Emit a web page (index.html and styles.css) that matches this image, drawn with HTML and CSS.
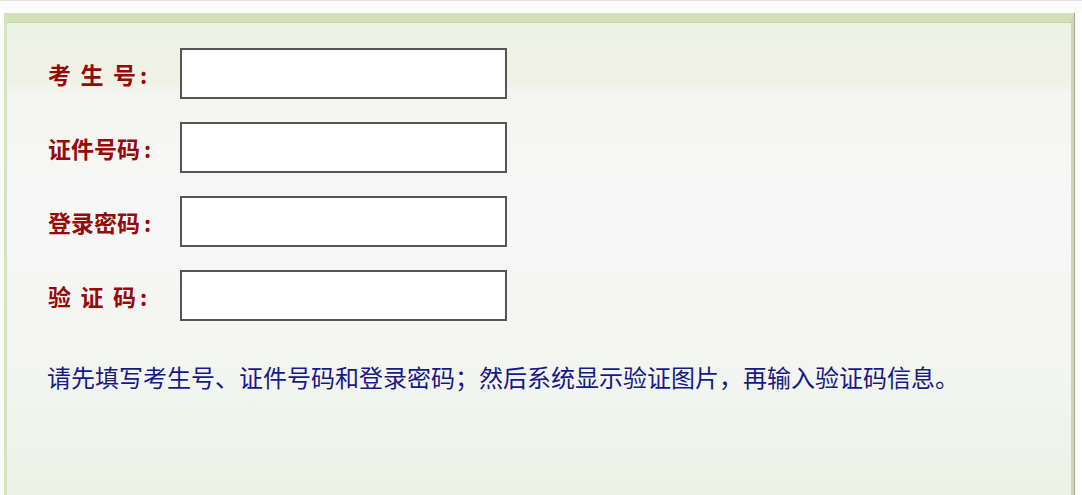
FILE: index.html
```html
<!DOCTYPE html>
<html lang="zh-CN">
<head>
<meta charset="utf-8">
<title>登录</title>
<link rel="stylesheet" href="styles.css">
</head>
<body>
<div class="topbar"></div>
<div class="panel">
  <form class="form">
    <div class="row">
      <label class="label"><span class="spaced">考生</span>号<span class="colon">:</span></label>
      <input class="field" type="text">
    </div>
    <div class="row">
      <label class="label">证件号码<span class="colon">:</span></label>
      <input class="field" type="text">
    </div>
    <div class="row">
      <label class="label">登录密码<span class="colon">:</span></label>
      <input class="field" type="password">
    </div>
    <div class="row">
      <label class="label"><span class="spaced">验证</span>码<span class="colon">:</span></label>
      <input class="field" type="text">
    </div>
  </form>
  <p class="hint">请先填写考生号、证件号码和登录密码；然后系统显示验证图片，再输入验证码信息。</p>
</div>
</body>
</html>
```
FILE: styles.css
```css
html, body {
  margin: 0;
  padding: 0;
  background: #ffffff;
  height: 100%;
  overflow: hidden;
}
body {
  font-family: "Noto Sans CJK SC", "Noto Sans", sans-serif;
}
.topbar {
  height: 12px;
  border-top: 1px solid #e4e4e4;
  background: #fcfcfc;
}
.panel {
  margin-left: 4px;
  width: 1070px;
  height: 482px;
  box-sizing: border-box;
  border-top: 9px solid #d2e2b6;
  border-left: 3px solid #d6e3bf;
  border-right: 3px solid #c9d8ae;
  box-shadow: inset 0 1px 0 #c3d6a0, 1px 0 0 #a9ae98;
  background: linear-gradient(to bottom, #edf2e3 0px, #f1f2e6 62px, #f5f5f3 72px, #f7f7f7 200px, #f3f5f0 360px, #ecf2e5 470px);
  padding: 26px 0 0 41px;
}
.form {
  display: flex;
  flex-direction: column;
  gap: 23px;
}
.row {
  display: flex;
  align-items: center;
}
.label {
  width: 132px;
  font-size: 23px;
  font-weight: bold;
  color: #960a0a;
  line-height: 28px;
  display: flex;
  align-items: center;
}
.spaced {
  letter-spacing: 9.5px;
}
.colon {
  margin-left: 4px;
  font-size: 22px;
}
.field {
  width: 327px;
  height: 51px;
  box-sizing: border-box;
  border: 2px solid #555555;
  background: #fefefe;
  margin: 0;
  padding: 0 6px;
  outline: none;
}
.hint {
  margin: 43px 0 0 -1px;
  font-size: 24px;
  line-height: 26px;
  color: #17198a;
}
```
